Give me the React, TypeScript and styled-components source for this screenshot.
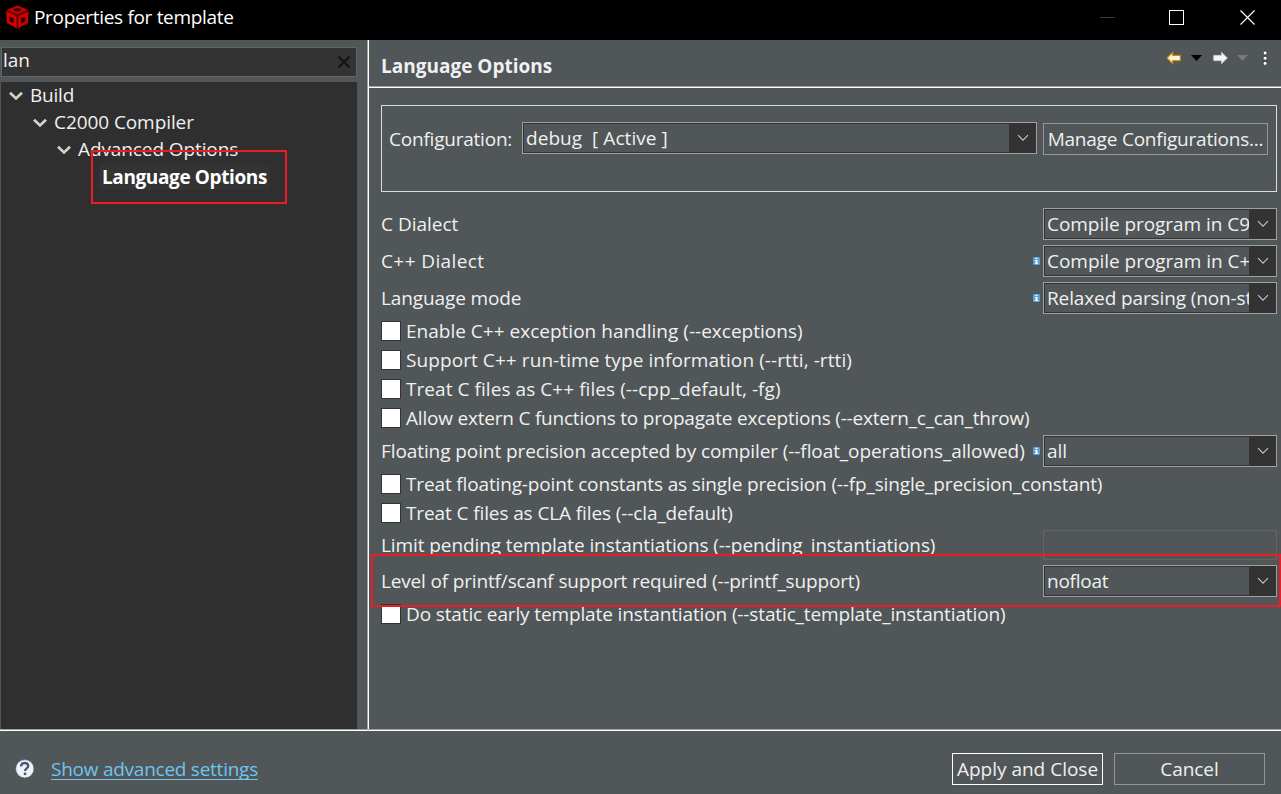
import React from "react";
import styled, { createGlobalStyle, css } from "styled-components";

const color = {
  face: "#515658",
  tree: "#2f2f2f",
  field: "#333333",
  text: "#f0f0f0",
  edge: "#a0a0a0",
  mark: "#ed1c24",
  link: "#6fc5ee",
};

const GlobalStyle = createGlobalStyle`
  * { box-sizing: border-box; }
  body {
    margin: 0;
    overflow: hidden;
    background: ${color.face};
    color: ${color.text};
    font: 19px/24px "Open Sans", "Noto Sans", sans-serif;
  }
`;

const Window = styled.div`
  display: flex;
  flex-direction: column;
  width: 1281px;
  height: 794px;
  overflow: hidden;
`;

const TitleBar = styled.header`
  display: flex;
  align-items: center;
  height: 40px;
  padding: 0 18px 5px 5px;
  background: #000;
  color: #fff;
`;

const Title = styled.h1`
  flex: 1;
  margin: 0 0 0 4px;
  padding-bottom: 2px;
  font-size: inherit;
  font-weight: 400;
`;

const WindowButtons = styled.div`
  display: flex;
  gap: 54px;
  width: 163px;
  svg { display: block; flex: none; width: 16px; height: 23px; }
  svg + svg { margin-left: -1px; }
  svg:last-child { margin-left: 1px; }
`;

const Main = styled.div`
  display: flex;
  height: 689px;
`;

const Sidebar = styled.aside`
  display: flex;
  flex-direction: column;
  width: 369px;
  padding: 7px 11px 0 1px;
  border-right: 1px solid #fff;
  box-shadow: inset -1px 0 ${color.edge};
`;

const SearchBox = styled.div`
  display: flex;
  align-items: center;
  justify-content: space-between;
  height: 30px;
  margin-bottom: 5px;
  padding: 0 5px 4px 1px;
  border: 1px solid #646464;
  background: ${color.field};
  svg { margin-top: 4px; }
`;

const Tree = styled.ul`
  position: relative;
  flex: 1;
  margin: 0;
  padding: 0;
  list-style: none;
  background: ${color.tree};
`;

const TreeRow = styled.li<{ $depth: number }>`
  display: flex;
  align-items: center;
  height: 27px;
  padding-left: ${(p) => 7.5 + p.$depth * 24}px;
  gap: 7.5px;
`;

const Label = styled.span<{ $track?: number }>`
  white-space: pre;
  letter-spacing: ${(p) => p.$track ?? 0}px;
`;

const TreeLabel = styled(Label)`
  padding-bottom: 2px;
`;

const SelectedItem = styled.strong`
  margin: 1px 0 0 18.5px;
  padding: 0 3px;
  background: #333;
  color: #fff;
  line-height: 25px;
  letter-spacing: -0.39px;
  white-space: nowrap;
`;

const Highlight = styled.div<{ $wide?: boolean }>`
  position: absolute;
  border: 2px solid ${color.mark};
  pointer-events: none;
  ${(p) =>
    p.$wide
      ? css`left: -10px; right: -4px; top: -11px; bottom: -10px;`
      : css`left: 90px; top: 68px; width: 196px; height: 54px;`}
`;

const Content = styled.main`
  display: flex;
  flex: 1;
  flex-direction: column;
  min-width: 0;
`;

const PageHeader = styled.div`
  display: flex;
  align-items: center;
  justify-content: space-between;
  height: 48px;
  padding: 4px 8px 0 12px;
  border-bottom: 1px solid #fff;
  box-shadow: inset 0 -1px ${color.edge};
`;

const PageTitle = styled.h2`
  margin: 0;
  font-size: inherit;
`;

const NavIcons = styled.div`
  align-self: flex-start;
  height: 20px;
  padding-top: 4px;
  svg { display: block; }
`;

const ConfigGroup = styled.section`
  display: flex;
  align-items: flex-start;
  height: 87px;
  margin: 17px 4px 16px 12px;
  padding: 16px 8px 0 7px;
  border: 1px solid #dcdcdc;
`;

const ConfigLabel = styled(Label)`
  width: 133px;
  padding-top: 5px;
`;

const Combo = styled.div<{ $width: number }>`
  display: flex;
  flex: none;
  width: ${(p) => p.$width}px;
  height: 32px;
  border: 1px solid ${color.edge};
  background: ${color.field};
`;

const ComboValue = styled.div<{ $track?: number }>`
  flex: 1;
  min-width: 0;
  overflow: hidden;
  margin: 1px 0 1px 1px;
  padding: 1px 0 0 2px;
  background: ${color.face};
  letter-spacing: ${(p) => p.$track ?? 0}px;
  line-height: 27px;
  white-space: pre;
`;

const ComboArrow = styled.div`
  display: flex;
  align-items: center;
  justify-content: center;
  width: 27px;
  svg { display: block; }
`;

const Button = styled.button<{ $width: number; $primary?: boolean; $track?: number }>`
  display: flex;
  align-items: center;
  justify-content: center;
  width: ${(p) => p.$width}px;
  height: 32px;
  padding: 0;
  border: 1px solid ${(p) => (p.$primary ? "#fff" : "#969696")};
  background: ${color.face};
  color: inherit;
  font: inherit;
  letter-spacing: ${(p) => p.$track ?? 0}px;
  white-space: nowrap;
`;

const ManageButton = styled(Button)`
  margin: 1px 0 0 6px;
`;

const Options = styled.div`
  display: flex;
  flex-direction: column;
  gap: 5px;
  padding: 0 4px 0 12px;
`;

const OptionRow = styled.div`
  position: relative;
  display: flex;
  align-items: center;
  height: 32px;
`;

const OptionLabel = styled(Label)`
  flex: 1;
`;

const InfoBadge = styled.svg`
  display: block;
  flex: none;
  width: 7px;
  height: 8px;
  margin-right: 3px;
`;

const CheckRow = styled.label`
  display: flex;
  align-items: center;
  gap: 5px;
  height: 24px;
`;

const CheckBox = styled.span`
  width: 20px;
  height: 20px;
  border: 1px solid #333;
  background: #fff;
`;

const TextRow = styled.div`
  display: flex;
  align-items: center;
  height: 30px;
`;

const DisabledField = styled.div`
  width: 234px;
  height: 30px;
  border: 1px solid #646464;
`;

const Footer = styled.footer`
  display: flex;
  align-items: center;
  height: 65px;
  padding: 14px 16px 0 15px;
  border-top: 1px solid ${color.edge};
  box-shadow: inset 0 1px #fff;
`;

const HelpIcon = styled.svg`
  display: block;
  width: 20px;
  height: 20px;
  margin-bottom: 1px;
`;

const AdvancedLink = styled.a`
  margin: 0 auto 0 16px;
  color: ${color.link};
  letter-spacing: -0.25px;
  text-decoration: underline;
  text-decoration-thickness: 1px;
  text-underline-offset: 3px;
  text-decoration-skip-ink: none;
`;

const FooterButtons = styled.div`
  display: flex;
  gap: 11px;
`;

const Cube = () => (
  <svg width="25" height="25" viewBox="0 0 25 25">
    <path d="M12.5 0.5 23.5 5 23 18 12.5 24 2 18 1 5z" fill="#5a0000" />
    <path d="M12.5 0.6 22.6 4.8 12.5 9.4 2.2 4.8z" fill="#c40000" />
    <path d="M1.2 6.4 11.6 11v12.2L2 18z" fill="#d80000" />
    <path d="M23.6 6.4 13.4 11v12.2L22.8 18z" fill="#cc0000" />
    <ellipse cx="12.4" cy="4.8" rx="3.6" ry="1.5" fill="#280000" />
    <path d="M4.4 11.4 8.6 13.4v5L4.8 16.4z" fill="#280000" />
    <path d="M20.4 11.4 16.2 13.4v5L20 16.4z" fill="#280000" />
  </svg>
);

const TreeChevron = () => (
  <svg width="14" height="10" viewBox="0 0 14 10">
    <path d="M1 1.8 7 7.4 13 1.8" fill="none" stroke="#d0d0d0" strokeWidth="2.8" />
  </svg>
);

const ComboChevron = () => (
  <svg width="12" height="8" viewBox="0 0 12 8">
    <path d="M1 1.2 6 6.2 11 1.2" fill="none" stroke="#c8c8c8" strokeWidth="1.1" />
  </svg>
);

const Info = () => (
  <InfoBadge viewBox="0 0 7 8">
    <rect width="7" height="8" rx="1.2" fill="#5b9fd6" />
    <path d="M2.5 0.8h2v1.3h-2zM2 3h2.5v3H5.2v1H1.8v-1h.8V4H2z" fill="#fff" />
  </InfoBadge>
);

const Help = () => (
  <HelpIcon viewBox="0 0 20 20">
    <circle cx="9.8" cy="9.8" r="9.2" fill="#f1f2f5" stroke="#59657c" strokeWidth="0.8" />
    <path d="M6.1 7.4C6.1 5.1 7.6 4 9.7 4c2.1 0 3.5 1.1 3.5 2.9 0 2.5-3.2 2.5-3.2 5.2" fill="none" stroke="#46587c" strokeWidth="2.3" />
    <rect x="8.8" y="13.6" width="2.5" height="2.5" fill="#46587c" />
  </HelpIcon>
);

const Nav = () => (
  <NavIcons>
    <svg width="110" height="20" viewBox="0 0 110 20">
      <defs>
        <linearGradient id="back" x1="0" y1="0" x2="1" y2="0">
          <stop offset="0" stopColor="#fff3b8" />
          <stop offset="1" stopColor="#fffdf0" />
        </linearGradient>
      </defs>
      <path d="M4 10 9.7 4.4v3h7.5v5.2H9.7v3z" fill="url(#back)" stroke="#c98a1c" strokeWidth="1.1" />
      <path d="M28 7h11l-5.5 6z" fill="#000" />
      <path d="M64.3 10 58.6 4.4v3h-7.8v5.2h7.8v3z" fill="#f6f6f6" stroke="#d0d0d0" strokeWidth="1" />
      <path d="M74 7h11l-5.5 6z" fill="#787a7c" />
      <g fill="#fff" stroke="#33363a" strokeWidth="0.8">
        <circle cx="102.1" cy="5" r="2" />
        <circle cx="102.1" cy="10.2" r="2" />
        <circle cx="102.1" cy="15.4" r="2" />
      </g>
    </svg>
  </NavIcons>
);

type Option =
  | { kind: "combo"; label: string; value: string; info?: boolean; track?: number; valueTrack?: number; marked?: boolean }
  | { kind: "check"; label: string; track?: number }
  | { kind: "text"; label: string; track?: number };

const options: Option[] = [
  { kind: "combo", label: "C Dialect", value: "Compile program in C99 mode", valueTrack: -0.05 },
  { kind: "combo", label: "C++ Dialect", value: "Compile program in C++03 mode", info: true, track: 0.4, valueTrack: -0.03 },
  { kind: "combo", label: "Language mode", value: "Relaxed parsing (non-strict ANSI)", info: true, track: -0.12, valueTrack: -0.12 },
  { kind: "check", label: "Enable C++ exception handling (--exceptions)", track: 0.01 },
  { kind: "check", label: "Support C++ run-time type information (--rtti, -rtti)", track: 0.08 },
  { kind: "check", label: "Treat C files as C++ files (--cpp_default, -fg)", track: 0.06 },
  { kind: "check", label: "Allow extern C functions to propagate exceptions (--extern_c_can_throw)", track: -0.208 },
  { kind: "combo", label: "Floating point precision accepted by compiler (--float_operations_allowed)", value: "all", info: true, track: -0.09 },
  { kind: "check", label: "Treat floating-point constants as single precision (--fp_single_precision_constant)", track: -0.145 },
  { kind: "check", label: "Treat C files as CLA files (--cla_default)", track: -0.11 },
  { kind: "text", label: "Limit pending template instantiations (--pending_instantiations)", track: -0.09 },
  { kind: "combo", label: "Level of printf/scanf support required (--printf_support)", value: "nofloat", track: -0.16, valueTrack: -0.25, marked: true },
  { kind: "check", label: "Do static early template instantiation (--static_template_instantiation)", track: -0.13 },
];

const Dropdown = ({ width, value, track }: { width: number; value: string; track?: number }) => (
  <Combo $width={width}>
    <ComboValue $track={track}>{value}</ComboValue>
    <ComboArrow><ComboChevron /></ComboArrow>
  </Combo>
);

const OptionLine = ({ option }: { option: Option }) => {
  if (option.kind === "check") {
    return (
      <CheckRow>
        <CheckBox />
        <Label $track={option.track}>{option.label}</Label>
      </CheckRow>
    );
  }
  if (option.kind === "text") {
    return (
      <TextRow>
        <OptionLabel $track={option.track}>{option.label}</OptionLabel>
        <DisabledField />
      </TextRow>
    );
  }
  return (
    <OptionRow>
      <OptionLabel $track={option.track}>{option.label}</OptionLabel>
      {option.info && <Info />}
      <Dropdown width={234} value={option.value} track={option.valueTrack} />
      {option.marked && <Highlight $wide />}
    </OptionRow>
  );
};

export default function App() {
  return (
    <Window>
      <GlobalStyle />
      <TitleBar>
        <Cube />
        <Title><Label $track={-0.32}>Properties for template</Label></Title>
        <WindowButtons>
          <svg viewBox="0 0 16 23"><path d="M0 11.5h15" stroke="#3a3a3a" /></svg>
          <svg viewBox="0 0 16 23"><rect x="0.5" y="4.5" width="14" height="14" fill="none" stroke="#fff" /></svg>
          <svg viewBox="0 0 16 23"><path d="M0.5 4.5 14.5 18.5M14.5 4.5 0.5 18.5" stroke="#fff" strokeWidth="1.2" /></svg>
        </WindowButtons>
      </TitleBar>
      <Main>
        <Sidebar>
          <SearchBox>
            <Label>lan</Label>
            <svg width="14" height="14" viewBox="0 0 14 14">
              <path d="M1.5 1.5 12.5 12.5M12.5 1.5 1.5 12.5" stroke="#141414" strokeWidth="2.2" />
            </svg>
          </SearchBox>
          <Tree>
            <TreeRow $depth={0}><TreeChevron /><TreeLabel $track={-0.2}>Build</TreeLabel></TreeRow>
            <TreeRow $depth={1}><TreeChevron /><TreeLabel $track={-0.08}>C2000 Compiler</TreeLabel></TreeRow>
            <TreeRow $depth={2}><TreeChevron /><TreeLabel $track={-0.1}>Advanced Options</TreeLabel></TreeRow>
            <TreeRow $depth={3}><SelectedItem>Language Options</SelectedItem></TreeRow>
            <Highlight />
          </Tree>
        </Sidebar>
        <Content>
          <PageHeader>
            <PageTitle>Language Options</PageTitle>
            <Nav />
          </PageHeader>
          <ConfigGroup>
            <ConfigLabel $track={-0.22}>Configuration:</ConfigLabel>
            <Dropdown width={515} value="debug  [ Active ]" track={0.05} />
            <ManageButton $width={225} $track={-0.22}>Manage Configurations...</ManageButton>
          </ConfigGroup>
          <Options>
            {options.map((option) => <OptionLine key={option.label} option={option} />)}
          </Options>
        </Content>
      </Main>
      <Footer>
        <Help />
        <AdvancedLink>Show advanced settings</AdvancedLink>
        <FooterButtons>
          <Button $width={151} $primary>Apply and Close</Button>
          <Button $width={151} $track={-0.05}>Cancel</Button>
        </FooterButtons>
      </Footer>
    </Window>
  );
}
